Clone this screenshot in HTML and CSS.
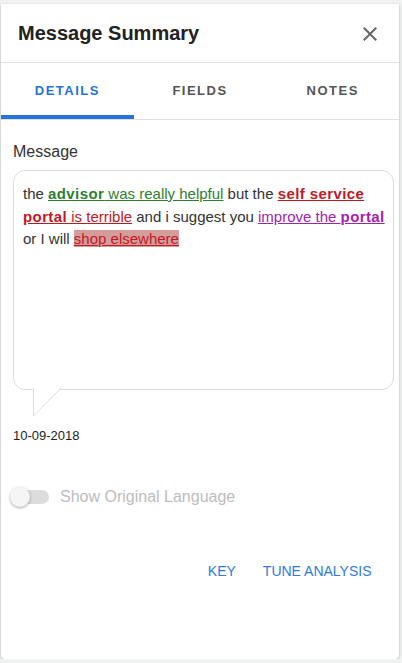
FILE: index.html
```html
<!DOCTYPE html>
<html>
<head>
	<title>Message Summary</title>
	<link rel="stylesheet" href="styles.css">
</head>
<body>
	<div class='card'>
		<div class='cardheader'>
			<h1 class='cardtitle'>Message Summary</h1>
			<svg class='closeicon' viewBox="0 0 24 24" width="24" height="24"><path d="M19 6.41L17.59 5 12 10.59 6.41 5 5 6.41 10.59 12 5 17.59 6.41 19 12 13.41 17.59 19 19 17.59 13.41 12z" fill="#666"/></svg>
		</div>
		<div class='tabs'>
			<div class='tab active'>DETAILS</div>
			<div class='tab'>FIELDS</div>
			<div class='tab'>NOTES</div>
		</div>
		<div class='content'>
			<div class='label'>Message</div>
			<div class='bubble'>
				the <span class='pos'><b>advisor</b> was really helpful</span> but the <span class='neg'><b>self service portal</b> is terrible</span> and i suggest you <span class='sug'>improve the <b>portal</b></span> or I will <span class='neg mark'>shop elsewhere</span>
				<svg class='tail' width="30" height="30" viewBox="0 0 30 30"><path d="M0.5 0 L0.5 28 L28 0 Z" fill="#fff"/><path d="M0.5 0 L0.5 28 L28 0" fill="none" stroke="#ddd" stroke-width="1"/></svg>
			</div>
			<div class='date'>10-09-2018</div>
			<div class='toggle'>
				<div class='track'><div class='thumb'></div></div>
				<span class='togglelabel'>Show Original Language</span>
			</div>
			<div class='actions'>
				<div class='btn'>KEY</div>
				<div class='btn'>TUNE ANALYSIS</div>
			</div>
		</div>
	</div>
</body>
</html>
```
FILE: styles.css
```css
body {
	margin: 0;
	background-color: #f1f2f2;
	font-family: "Liberation Sans", Arial, sans-serif;
	color: #333;
}
.card {
	margin: 4px 3px 0 1px;
	height: 655px;
	background-color: white;
	border-radius: 0 0 4px 4px;
	box-shadow: 0 1px 3px rgba(0, 0, 0, 0.3);
}
.cardheader {
	height: 58px;
	display: flex;
	align-items: center;
	justify-content: space-between;
	padding: 0 17px 0 17px;
	border-bottom: 1px solid #e0e0e0;
}
.cardtitle {
	margin: 0;
	font-size: 20px;
	font-weight: bold;
	color: #222;
}
.closeicon {
	display: block;
	margin-top: 1px;
}
.tabs {
	display: flex;
	border-bottom: 1px solid #e0e0e0;
}
.tab {
	flex: 1;
	height: 56px;
	display: flex;
	align-items: center;
	justify-content: center;
	font-size: 13px;
	font-weight: bold;
	letter-spacing: 1.5px;
	color: #555;
	padding-bottom: 2px;
	box-sizing: border-box;
}
.tab.active {
	color: #2672de;
	box-shadow: inset 0 -4px 0 #2672de;
}
.content {
	padding: 20px 5px 0 12px;
}
.label {
	font-size: 16px;
	line-height: 24px;
	color: #333;
}
.bubble {
	position: relative;
	margin-top: 6px;
	height: 195px;
	border: 1px solid #ddd;
	border-radius: 12px;
	padding: 12px 6px 11px 9px;
	font-size: 15px;
	line-height: 22.5px;
	color: #333;
}
.bubble b {
	letter-spacing: 0.4px;
}
.pos {
	color: #2e8030;
	text-decoration: underline;
}
.neg {
	color: #c2191f;
	text-decoration: underline;
}
.sug {
	color: #a323b0;
	text-decoration: underline;
}
.mark {
	background-color: #d59c9c;
}
.tail {
	position: absolute;
	left: 19px;
	bottom: -29px;
}
.date {
	margin-top: 37px;
	font-size: 13px;
	line-height: 18px;
	color: #222;
}
.toggle {
	margin-top: 42px;
	display: flex;
	align-items: center;
	height: 20px;
}
.track {
	position: relative;
	width: 36px;
	height: 14px;
	border-radius: 7px;
	background-color: #dcdcdc;
}
.thumb {
	position: absolute;
	left: -3px;
	top: -3px;
	width: 20px;
	height: 20px;
	border-radius: 50%;
	background-color: #f5f5f5;
	box-shadow: 0 1px 3px rgba(0, 0, 0, 0.35);
}
.togglelabel {
	margin-left: 11px;
	font-size: 16px;
	color: #bdbdbd;
}
.actions {
	margin-top: 48px;
	display: flex;
	justify-content: flex-end;
	padding-right: 9px;
}
.btn {
	padding: 8px 13.5px;
	font-size: 14px;
	color: #2f7bdc;
}
```
